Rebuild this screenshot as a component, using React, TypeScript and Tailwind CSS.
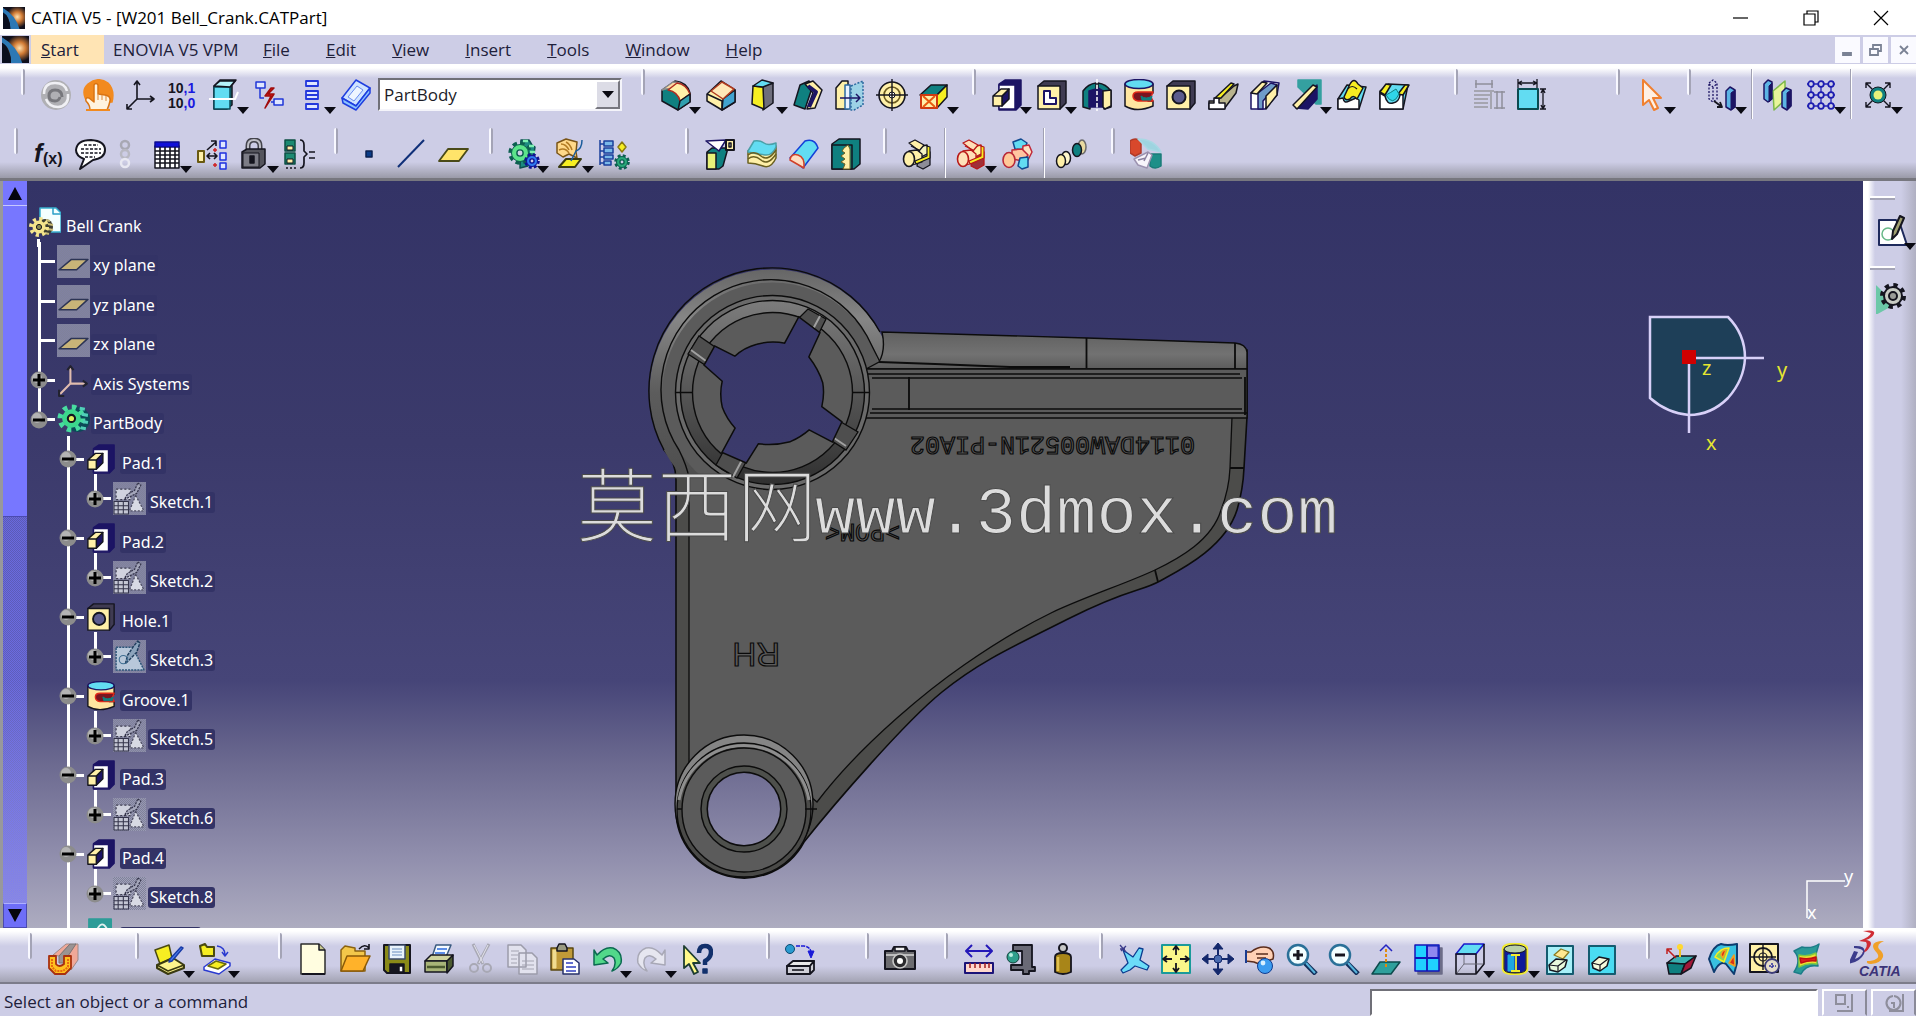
import type { ReactNode } from 'react'

const INK = '#15151f'
const NAVY = '#1c1464'
const TEAL = '#0f8080'
const CREAM = '#fff0a8'
const CYAN = '#62dcf2'
const YEL = '#f6ee22'

// shorthand for a path: d, fill, stroke, stroke width
function P({ d, f = 'none', s = INK, w = 1.5, dash }: { d: string; f?: string; s?: string; w?: number; dash?: string }) {
  return <path d={d} fill={f} stroke={s} strokeWidth={w} strokeDasharray={dash} strokeLinejoin="round" />
}

function Gear({ x, y, r, f, s = INK }: { x: number; y: number; r: number; f: string; s?: string }) {
  return (
    <g>
      <circle cx={x} cy={y} r={r} fill="none" stroke={s} strokeWidth={r * 0.6} strokeDasharray={`${r * 0.45} ${r * 0.335}`} />
      <circle cx={x} cy={y} r={r - 0.5} fill={f} stroke={s} strokeWidth={1} />
      <circle cx={x} cy={y} r={r * 0.35} fill="#cfcfe6" stroke={s} strokeWidth={1.4} />
    </g>
  )
}

function Pair({ a, b, c, line = INK }: { a: string; b: string; c: string; line?: string }) {
  return (
    <>
      <P d="M17 17l11-3v13l-7 4-6-3z" f={c} s={line} w={1.3} />
      <P d="M16 9l9-2 2 8-8 4-4-3z" f={b} s={line} w={1.3} />
      <P d="M7 5l6-3 9 5-5 6z" f={a} s={line} w={1.3} />
      <P d="M9 8l8 4 2 7" s={line} w={1.3} />
      <P d="M7 13l8-1 5 4v8l-13 4z" f={a} s={line} w={1.3} />
      <P d="M13 23l12-5V8l3 1v11l-14 6z" f={YEL} s={line} w={1.2} />
      <ellipse cx="7" cy="21" rx="5.5" ry="7.5" fill={a} stroke={line} strokeWidth="1.6" />
    </>
  )
}

const icons: Record<string, ReactNode> = {
  update: (
    <>
      <circle cx="16" cy="16" r="15" fill="#b0b0b4" />
      <P d="M4 15Q4 4 15 4q10 0 12 8" s="#f0f0f4" w={2.5} />
      <P d="M22 18q0-7-7-7-6 0-6 6 0 5 6 5 4 0 5-4" s="#77777c" w={3} />
      <P d="M28 15q1 12-10 13-9 0-12-8" s="#f0f0f4" w={2.5} />
    </>
  ),
  hand: (
    <>
      <P d="M6 24Q-2 12 6 5q10-8 20-1 7 7 4 19z" f="#f28a1e" s="#f28a1e" />
      <P d="M8 31q0-5-4-9-1-4 3-3l5 4V6q2-3 4 0v9l7 1q6 1 5 6-1 5-3 9z" f="#fff3df" s="#d97414" />
      <P d="M16 15v6M20 16v5M24 17v5" s="#e29b55" w={1.2} />
      <P d="M4 31h24" s="#f28a1e" w={2} />
    </>
  ),
  axis: <P d="M13 2v18M13 20h17M13 20L3 30M10 6l3-4 3 4M26 17l4 3-4 3M3 25v5h5" w={1.6} />,
  mean: (
    <g fontFamily="Liberation Sans" fontWeight="700" fontSize="14" fill={INK}>
      <text x="2" y="14">10<tspan fill="#1a1ae0">,1</tspan></text>
      <text x="2" y="29">10<tspan fill="#1a1ae0">,0</tspan></text>
    </g>
  ),
  box: (
    <>
      <P d="M6 7l6-6h16l-4 5v20l-5 4H6z" f={TEAL} />
      <P d="M6 8h16v22H6z" f={CYAN} s="#0b4a58" />
      <P d="M6 7l6-5h15l-5 6z" f="#b5f4fb" />
      <P d="M1 20h26l3-7" s="#ffffff" w={2} />
    </>
  ),
  breakLink: (
    <>
      <P d="M3 3h9v6H3zM21 20h9v6h-9z" f="#dfe6ff" s="#2137d8" />
      <P d="M7 9v10h4M21 23h-3" s="#2137d8" />
      <P d="M18 9l-6 8h6l-6 12 9-14h-6l6-6z" f="#e01818" s="#a00c0c" />
    </>
  ),
  stack: <P d="M11 2h12v5H11zM11 12h12v8H11zM11 25h12v5H11zM11 16h12" f="#dfe6ff" s="#2338dc" w={1.8} />,
  plate: (
    <>
      <P d="M2 19L16 1l14 8-14 18z" f="#cfe3ff" s="#1e3ee0" />
      <P d="M2 19l14 8 14-18v5L16 31 3 24z" f="#8cc4ff" s="#1e3ee0" />
      <P d="M8 18l9-11 6 4-9 11z" f="#eef5ff" s="#6a8cf0" w={1} />
    </>
  ),
  fillet: (
    <>
      <P d="M2 11L15 2q12 1 15 12v9L18 31 2 22z" f={TEAL} />
      <P d="M2 11L13 3q8 0 11 5l-6 3q-7-3-16 0z" f="#ffd9a0" s="#8a8a8a" />
      <P d="M8 11l9-7q9 1 13 11l-10 7Q18 13 8 11z" f={CREAM} s="#b02c20" />
      <P d="M20 22l10-7v8l-12 8z" f="#2f9fae" />
    </>
  ),
  chamfer: (
    <>
      <P d="M2 15L16 2l14 9v12L17 31 2 22z" f={CREAM} />
      <P d="M18 20l12-9v12l-13 8z" f="#41a3cf" />
      <P d="M6 12L17 3l12 7-11 10z" f="#ffe8b8" s="#b03a20" />
      <P d="M2 15l15 7v9" />
    </>
  ),
  draft: (
    <>
      <P d="M16 7l10-3v20l-10 7z" f="#6e6e7c" />
      <P d="M6 7l10 1 1 22-12-5z" f={YEL} />
      <P d="M6 7l9-6 11 3-10 4z" f={CYAN} />
    </>
  ),
  shell: (
    <>
      <P d="M2 26L8 6l9-4 4 4-8 24z" f={TEAL} />
      <P d="M13 5l8-3 9 9-7 18-8 1 6-16z" f={CREAM} />
      <P d="M16 7l8 6-7 15" s={NAVY} w={4} />
    </>
  ),
  thick: (
    <>
      <P d="M2 9l6-7h6v28H2z" f={CREAM} />
      <P d="M11 6h5v24h-5z" f="#e9f2ff" s="#2c6aa0" />
      <P d="M17 7l12-5v24l-9 5h-3z" f="#9dd2e6" s="#2c6aa0" dash="2 1.5" />
      <P d="M6 19h20M22 15l4 4-4 4" s={NAVY} />
    </>
  ),
  target: (
    <>
      <circle cx="16" cy="16" r="13" fill={CREAM} stroke={INK} strokeWidth="1.6" />
      <circle cx="16" cy="16" r="8" fill="none" stroke="#6b5a20" strokeWidth="1.6" />
      <circle cx="16" cy="16" r="3" fill="#fff" stroke={INK} />
      <P d="M16 0v32M0 16h32" w={1.4} />
    </>
  ),
  replace: (
    <>
      <P d="M2 16L13 6h16l-10 10z" f={TEAL} />
      <P d="M19 16l10-10v12l-10 11z" f={YEL} />
      <P d="M3 16h16v13H3z" f={CREAM} s="#d03a10" w={2} />
      <P d="M5 17l12 11M17 17L5 28" s="#e85a10" w={2} />
    </>
  ),
  pad: (
    <>
      <P d="M8 5l6-4h16v25l-5 5H8z" f={NAVY} s={NAVY} />
      <P d="M8 6h16v24H8z" f="#fff" s={NAVY} />
      <P d="M11 17l7-7v10l-7 7z" f={NAVY} />
      <P d="M2 17h9v10H2zM2 17l8-7h8l-7 7z" f={CREAM} />
    </>
  ),
  pocket: (
    <>
      <P d="M2 7l6-5h22v22l-6 6z" f="#3f3b52" />
      <P d="M2 7h22v23H2z" f={CREAM} />
      <P d="M8 12h6v7h6v6H8z" f="#fff" s={NAVY} w={2} />
    </>
  ),
  shaft: (
    <>
      <P d="M2 12q5-7 13-8v22H9v4l-7-2z" f={TEAL} />
      <P d="M30 12q-5-7-13-8v22h6v4l7-2z" f={TEAL} />
      <P d="M8 12l7-2v18H8z" f={NAVY} s={NAVY} />
      <P d="M17 9l5 3v16h-5z" f={NAVY} s={NAVY} />
      <P d="M22 12l8-1v16l-6 3-2-2z" f={CREAM} />
      <P d="M16 0v32" s="#fff" dash="4 2" />
    </>
  ),
  groove: (
    <>
      <P d="M2 5v22q12 7 28 0v-5h-5v-8h5V5z" f="#ffe6a0" />
      <ellipse cx="16" cy="5" rx="14" ry="4.5" fill={CYAN} stroke={NAVY} strokeWidth="1.5" />
      <P d="M30 13H15q-5 0-5 4t5 5h15l-2-4z" f="#7a1420" s="#e02818" />
      <P d="M18 17q5 4 11 0l-1 4H19z" f={TEAL} s={TEAL} w={1} />
    </>
  ),
  hole: (
    <>
      <P d="M2 7l6-5h22v22l-5 6z" f="#3f3b52" />
      <P d="M2 7h23v23H2z" f={CREAM} />
      <circle cx="14" cy="18" r="6.5" fill="#5b5b8e" stroke={INK} strokeWidth="2" />
    </>
  ),
  rib: (
    <>
      <P d="M12 20L27 7l4-2-2 9-12 16H2v-8h8z" f="#b9b48e" />
      <P d="M2 24h5v-5h5v5h6v6H2z" f="#fff" />
      <P d="M8 19L24 4l3 1-13 14z" f={YEL} />
    </>
  ),
  slot: (
    <>
      <P d="M2 14L15 2l15 2-2 12-12 14H2z" f="#fff" s={NAVY} />
      <P d="M9 14L22 4l6 2-14 16v8H9z" f="#6f9cc9" s={NAVY} />
      <P d="M2 14L13 3l5 1L8 15z" f={CREAM} />
      <P d="M17 17L28 6v10L17 30z" f={CREAM} />
    </>
  ),
  stiffener: (
    <>
      <P d="M7 1h23v24h-5L7 8z" f="#34a0a0" s="#34a0a0" />
      <P d="M5 29l12 1 9-10V6z" f={NAVY} s={NAVY} />
      <P d="M2 26L22 6l4 2L6 30z" f={CREAM} />
    </>
  ),
  multiA: (
    <>
      <P d="M2 20l9-14 19 2-7 22H2z" f={CYAN} />
      <P d="M2 30V20l5-1q1 6 6 3l7-3 3 2v9z" f="#fff" />
      <P d="M8 18l6-13q4-7 8 0l5 4-6 11q-4-5-7 0-5 2-6-2z" f={YEL} />
      <P d="M12 10q4-5 9 0" w={1.2} />
    </>
  ),
  multiB: (
    <>
      <P d="M2 12l8-7 20 1-5 24H2z" f={CYAN} />
      <P d="M2 30V14l5 3q2 9 8 7 6-1 7-8l3-2v16z" f="#fff" />
      <P d="M2 13l6-8 5 1-6 10zM20 15l7-9h4l-6 10z" f={YEL} />
      <P d="M8 16q7 12 13-1l-3-5q-6 4-10 6z" f="#2fd5ea" s={TEAL} w={1} />
    </>
  ),
  scaleOff: (
    <>
      <P d="M2 5h18M3 1v8M19 1v8M24 12v18M29 12v18M21 13h11M21 29h11" s="#8f8f9a" />
      <P d="M1 12h20M1 16h18M1 20h14M1 24h14M1 28h14M18 12v18" s="#a5a5b0" w={2} />
    </>
  ),
  scale: (
    <>
      <P d="M3 10h20v20H3z" f={CYAN} s="#0b4a50" w={2} />
      <P d="M3 4h19M3 0v9M22 0v9M28 10v20M25 10h6M25 30h6M7 2L3 4l4 2M18 2l4 2-4 2M26 14l2-4 2 4M26 26l2 4 2-4" w={1.3} />
    </>
  ),
  cursor: <P d="M8 1v25l6-5 5 10 4-2-5-10h8z" f="#fff0e4" s="#f08030" w={2} />,
  translate: (
    <>
      <P d="M3 4l4-3 4 3v16l-4 3-4-3zM3 5l4 3 4-3M7 8v14" dash="2 1.5" s={NAVY} w={1.3} />
      <P d="M8 22l8 6M11 28h5l-2-5" w={1.8} />
      <P d="M20 12l4-4 5 3v17l-4 3-5-3z" f="#5cb4e4" s={NAVY} />
      <P d="M25 14v17l4-3V11z" f={NAVY} s={NAVY} w={1} />
    </>
  ),
  mirror: (
    <>
      <P d="M1 5l4-4 4 2v17l-4 3-4-3z" f="#5cb4e4" s={NAVY} />
      <P d="M10 12L22 2v19L11 31z" f="#e8f59a" s="#7db84a" />
      <P d="M19 13l4-4 5 2v16l-4 4-5-3z" f="#5cb4e4" s={NAVY} />
      <P d="M6 7v16l3-3V4zM24 14v17l4-4V11z" f={NAVY} s={NAVY} w={1} />
    </>
  ),
  pattern: (
    <>
      <P d="M6 2v28M16 2v28M26 2v28M2 5h28M2 16h28M2 27h28" s="#2222b8" w={1.3} />
      {[6, 16, 26].map((x) => [5, 16, 27].map((y) => <circle key={`${x}-${y}`} cx={x} cy={y} r="2.8" fill="#cfcfe6" stroke="#1d1db0" strokeWidth="1.8" />))}
    </>
  ),
  scaling: (
    <>
      <P d="M4 4l24 24M28 4L4 28M4 9V4h5M23 4h5v5M28 23v5h-5M9 28H4v-5" w={1.4} />
      <circle cx="16" cy="16" r="8" fill={TEAL} stroke={INK} />
      <circle cx="16" cy="16" r="4.5" fill="#e8f27a" />
    </>
  ),
  // row two
  formula: (
    <g fill={INK} fontFamily="Liberation Sans" fontWeight="700">
      <text x="1" y="24" fontStyle="italic" fontSize="25">f</text>
      <text x="10" y="26" fontSize="16">(x)</text>
    </g>
  ),
  balloon: (
    <>
      <P d="M16 2q14 1 14 10 0 8-12 10L5 31l4-10Q1 18 1 12 2 2 16 2z" f="#fff" w={2} />
      <P d="M9 7h14M6 11h20M6 15h20M10 19h10" dash="3 1.5" w={1.6} />
    </>
  ),
  chain: (
    <>
      <circle cx="12" cy="7" r="4" fill="none" stroke="#a8a8b4" strokeWidth="2.5" />
      <circle cx="12" cy="16" r="4" fill="none" stroke="#b8b8c2" strokeWidth="2.5" />
      <circle cx="12" cy="25" r="4" fill="none" stroke="#e8e8f2" strokeWidth="2.5" />
    </>
  ),
  table: (
    <>
      <P d="M4 8h24v22H4z" f="#fff" />
      <P d="M4 4h24v5H4z" f="#1010d8" s="#0c0c90" />
      <P d="M4 13h24M4 17h24M4 21h24M4 25h24M9 9v21M14 9v21M19 9v21M24 9v21" w={1.6} />
    </>
  ),
  relations: (
    <>
      <P d="M2 13h6v11H2z" f={CREAM} s="#6a5a10" w={2} />
      <P d="M24 3h6v7h-6zM24 15h6v7h-6zM24 25h6v6h-6z" f="#dfe6ff" s="#1e30e0" />
      <P d="M11 18h10M14 15l-3 3 3 3M18 15l3 3-3 3M11 12l9-8M15 3h5v5" w={1.6} />
      <P d="M19 10v4M17 12h4M19 25v4M17 27h4" s="#d02020" />
    </>
  ),
  lock: (
    <>
      <P d="M10 14V8q0-6 6-6t6 6v6" s="#44444c" w={5} />
      <P d="M10 14V8q0-6 6-6t6 6v6" s="#c0c0c8" w={2} />
      <P d="M4 14l5-3h18v15l-5 4H4z" f="#55555d" />
      <P d="M5 15h16v14H5z" f="#7c7c86" w={1} />
      <P d="M12 18h4v7h-4z" f={INK} />
    </>
  ),
  equiv: (
    <>
      <P d="M2 2h10v11H2zM2 15h10v11H2z" f="#1c8a72" s="#0d4f43" />
      <P d="M4 8h6v4H4zM4 21h6v4H4z" f={CREAM} w={1} />
      <P d="M17 2q4 0 4 5v6l3 3-3 3v6q0 5-4 5M26 14h6M26 20h6M3 30h2M7 30h2M11 30h2" w={1.7} />
    </>
  ),
  point: <P d="M13 13h6v6h-6z" f="#0a3c88" s="#0a2050" />,
  line: <P d="M3 29L29 2" s="#0f2f78" w={2} />,
  plane: <P d="M2 23l9-12h20l-9 12z" f="#ffe46a" s="#4a4a18" w={1.8} />,
  body: (
    <>
      <P d="M13 2h8l3 5 3 2-1 7-6 12-8 2z" f="#1c8a80" s="#0d4f50" />
      <Gear x={12} y={15} r={9} f="#5ce48a" s="#0d5f50" />
      <P d="M15 3h5M21 8h5M22 14h5" s="#7cf0b0" w={2.5} />
      <Gear x={24} y={23} r={6} f="#2f7af0" s="#101090" />
    </>
  ),
  sketchBody: (
    <>
      <P d="M4 5l9-4 11 3-1 10 1 6-8-4-6 3-6-4z" f="#ffd98a" s="#7a5416" />
      <P d="M8 6q5 0 8 6M13 4q4 2 6 8M6 12q6-3 10 3" s="#b27b24" />
      <P d="M6 29l7-8h15l-6 8z" f={YEL} s="#3a3a10" w={2} />
      <P d="M29 2q0 9-6 11l-5 10" s="#1a5c9c" />
    </>
  ),
  insertSet: (
    <>
      <P d="M2 2v25M2 6h4M2 13h4M2 19h4M2 25h4" s="#1a3f9c" />
      <P d="M6 3h9v5H6zM6 10h9v5H6zM6 17h9v4H6zM6 23h7v4H6z" f="#7ab8e8" s="#1a3f9c" />
      <P d="M24 4l4 5-4 5-4-5z" f={YEL} s="#8a7a10" />
      <Gear x={24} y={24} r={6} f="#28a878" s="#0c5f50" />
    </>
  ),
  split: (
    <>
      <P d="M3 14l5-4h16l-5 18-4 3H3z" f={TEAL} />
      <P d="M3 15h9v16H3z" f="#e8f27a" />
      <P d="M2 3l20-1-7 11z" f="#fff" s={NAVY} />
      <P d="M22 2h8v10h-8z" f={CREAM} w={2} />
      <P d="M25 5h2v4h-2z" f="#fff" />
    </>
  ),
  surface: (
    <>
      <P d="M2 13q4-5 8-3t8 3 12-5v12q-5 11-13 8T2 25z" f={CREAM} s="#6a6020" />
      <P d="M2 13L8 3q6-1 10 2t12 0v4q-4 9-11 8T2 14z" f={CYAN} s="#4aa0a8" />
      <P d="M2 17q6-5 13 1t15-6M2 21q6-5 13 1t15-6" s="#6a6020" />
    </>
  ),
  halfPipe: (
    <>
      <P d="M2 20L17 3q10-3 13 7L15 30z" f={CYAN} s="#1440d8" />
      <P d="M2 22q1-7 8-5t6 13z" f="#ffdcc0" s="#d04028" />
    </>
  ),
  sew: (
    <>
      <P d="M2 6l7-5h21v25l-6 5H2z" f={TEAL} />
      <P d="M2 7h20v24H2z" f={TEAL} />
      <P d="M14 10l4-3 2 4v20h-7l2-5-4-2 4-3-4-3 4-3-3-2z" f={CREAM} s="#6a6020" w={1} />
    </>
  ),
  assemble: <Pair a={CREAM} b="#f4f4c0" c="#8c8c98" />,
  add: <Pair a="#ffe0b8" b={CREAM} c="#a03038" line="#b81818" />,
  remove: (
    <>
      <P d="M12 4l8-3 6 4-3 7-9-1z" f={CYAN} s="#104a90" />
      <P d="M22 8l6-1 3 7-4 8-6-2z" f="#ffe0c0" s="#c02838" />
      <P d="M11 12l10-1 6 6-4 6-12-2z" f="#ffc4a0" s="#c02838" />
      <P d="M19 20l8-1v10l-6 2-4-3z" f={CYAN} s="#104a90" />
      <ellipse cx="8" cy="22" rx="6" ry="7.5" fill="#ffc898" stroke="#b82838" strokeWidth="1.6" />
    </>
  ),
  union: (
    <>
      <ellipse cx="11" cy="20" rx="4.5" ry="6.5" fill="#fff7cc" stroke={INK} strokeWidth="1.5" />
      <ellipse cx="6" cy="23" rx="4.5" ry="6.5" fill={CREAM} stroke={INK} strokeWidth="1.5" />
      <ellipse cx="27" cy="9" rx="4" ry="7" fill="#e8d9a0" stroke="#6a6a6a" strokeWidth="1.5" />
      <ellipse cx="22" cy="12" rx="4.5" ry="6.5" fill={TEAL} stroke={INK} strokeWidth="1.5" />
    </>
  ),
  publish: (
    <>
      <P d="M0 3q5-4 11 0v12l-6 3-5-3z" f="#d8482c" s="#b03a28" />
      <P d="M8 1q16 0 23 13L18 11z" f="#9ed4e0" s="#a8d8e4" />
      <P d="M20 16h11v12q-6 4-11 0z" f="#1e8f88" s="#1a7c78" />
      <P d="M4 21l14-7 4 3-5 13-9-3z" f="#f7f5fb" s="#9c93b0" />
      <P d="M8 22l8-2M18 15l-4 8" s="#8b82a0" />
    </>
  ),
  // bottom bar
  vise: (
    <>
      <P d="M6 12L19 1h4L12 13zM20 14L28 1h3v16l-7 10z" f="#f0a898" s="#9c8a88" w={1} />
      <P d="M12 13L23 1h6l-8 12v7h-9z" f="#9a9494" s="#7c7474" w={1} />
      <P d="M2 13h7v8q3 4 8 0v-8h7v12l-6 6H8l-6-6z" f="#ffc020" s="#a83010" w={1.8} />
      <P d="M5 16v8l4 4h7l5-4v-8" s="#e86a10" w={2} dash="2 1" />
    </>
  ),
  openPen: (
    <>
      <P d="M1 7L15 2l3 13-12 6z" f={YEL} s="#4a4a10" />
      <P d="M3 22l16-7 11 7v3l-16 6-11-6z" f="#fff58c" s="#3a3a10" w={2} />
      <P d="M3 22l11 6 16-6" s="#3a3a10" />
      <P d="M29 5L18 18l-3 1 1-3L27 4z" f="#4a80f0" s="#1a3ca8" />
    </>
  ),
  openBox: (
    <>
      <P d="M1 3l5-2 2 3h7v9H3z" f={YEL} s="#4a4a10" w={2} />
      <P d="M18 3q8 1 8 9M23 9l3 4 3-4" s="#2a3ad0" />
      <P d="M5 24l11-8 15 4v3l-11 8-15-4z" f="#fff" s="#2a3ad0" />
      <P d="M9 23l8-5 10 3-8 5z" f={YEL} s="#6a6a10" />
    </>
  ),
  newDoc: (
    <>
      <P d="M4 1h18l6 6v24H4z" f="#fffde0" s="#2c2c2c" />
      <P d="M22 1v6h6" f="#c8c890" />
      <P d="M5 31h23" w={2} />
    </>
  ),
  open: (
    <>
      <P d="M2 7l4-4 10 2v3h10v20H2z" f="#f3c74a" s="#8a6210" />
      <P d="M2 28L8 13h23l-7 15z" f="#ffb22a" s="#8a5a08" />
      <P d="M20 6q6-6 10-1M30 1v5h-5" w={1.6} />
    </>
  ),
  save: (
    <>
      <P d="M3 2h26v28H6l-3-3z" f="#8a8a18" w={2} />
      <P d="M8 2h16v14H8z" f="#e9f3fb" s="#3a4a6a" />
      <P d="M11 6h10M11 9h10M11 12h10" s="#6b8ec0" w={1.2} />
      <P d="M9 21h14v9H9z" f={INK} />
      <P d="M18 23h4v6h-4z" f="#fff" />
    </>
  ),
  print: (
    <>
      <P d="M9 14l4-12h15l-5 12z" f="#f4faff" s="#3a5a80" />
      <P d="M14 6h10M12 10h10" s="#2a6ae0" />
      <P d="M2 18l6-6h22l-4 6z" f="#cfd3a0" />
      <P d="M2 18h22v11H2z" f="#a8b478" />
      <P d="M24 18l6-6v11l-6 7z" f="#4c5a30" />
      <P d="M4 24h18" s="#4c5a30" w={2.5} />
    </>
  ),
  cut: (
    <>
      <P d="M8 1l10 20M24 1L13 21" s="#a8a8b4" w={3} />
      <P d="M9 2l9 18M23 2L14 20" s="#e4e4ee" w={1} />
      <circle cx="9" cy="25" r="4" fill="none" stroke="#a8a8b4" strokeWidth="2" />
      <circle cx="22" cy="25" r="4" fill="none" stroke="#a8a8b4" strokeWidth="2" />
    </>
  ),
  copy: (
    <>
      <P d="M1 2h13l5 5v17H1zM12 10h13l5 5v16H12z" f="#e2e2ee" s="#9c9caa" />
      <P d="M4 8h8M4 12h7M4 16h6M4 20h6M15 18h12M15 22h12M15 26h12" s="#a4a4b2" w={1.2} />
    </>
  ),
  paste: (
    <>
      <P d="M2 5h22v22H2z" f="#c09a38" s="#5a4812" />
      <P d="M4 7h3v18H4z" f="#f0dc90" s="#f0dc90" w={1} />
      <P d="M8 5l2-4h6l2 4v3H8z" f="#9a9a80" />
      <P d="M14 16h11l5 4v11H14z" f="#fff" s="#26306a" />
      <P d="M17 20h7M17 24h10M17 28h10" s="#3040c0" w={1.6} />
    </>
  ),
  undo: (
    <P d="M3 7l3 5q8-9 16-7 10 4 8 15-3 6-9 8 5-7 2-13-4-5-11 1l5 4-14 2z" f="#52d88a" s="#0b6a50" />
  ),
  redo: (
    <P d="M29 7l-3 5q-8-9-16-7Q0 9 2 20q3 6 9 8-5-7-2-13 4-5 11 1l-5 4 14 2z" f="#e6e6f0" s="#a8a8b6" />
  ),
  whats: (
    <>
      <P d="M3 3v22l5-4 5 10 4-2-5-9h7z" f="#fff98a" s="#1c3c30" w={1.8} />
      <P d="M18 10q0-7 6-7t6 6-6 9v4" s="#12306c" w={4.5} />
      <P d="M22 26h4v4h-4z" f="#12306c" s="#12306c" />
    </>
  ),
  machine: (
    <>
      <circle cx="5" cy="6" r="4.5" fill="#2a9ad0" stroke="#0c4a70" />
      <P d="M11 3h8q7 1 7 7" s="#1a1ad8" dash="4 1" />
      <P d="M23 8l3 7 3-7z" f="#1a1ad8" s="#1a1ad8" w={1} />
      <P d="M2 23l6-5h21l-4 5z" f="#e8e8e8" w={1.8} />
      <P d="M2 23h23v8H2zM25 23l4-5v9l-4 4z" f="#d0d0d8" w={1.8} />
      <P d="M7 27h12" w={1.6} />
    </>
  ),
  camera: (
    <>
      <P d="M1 8h7l2-4h12l2 4h7v18H1z" f="#6c6c70" w={2} />
      <P d="M11 4h10v4H11z" f="#f0f0f0" />
      <P d="M2 12h28" s="#d8d8d8" />
      <circle cx="16" cy="18" r="7" fill="#2a2a2e" stroke="#c8c8c8" strokeWidth="1.6" />
      <circle cx="16" cy="18" r="3" fill="#fff" />
    </>
  ),
  measure: (
    <>
      <P d="M3 8h26M9 2L3 8l6 6M23 2l6 6-6 6" s="#2418b8" w={2} />
      <P d="M2 20h28v10H2z" f="#ffd8cc" s="#1c1478" w={2} />
      <P d="M7 20v5M12 20v5M17 20v5M22 20v5M26 20v5" s="#a02020" />
    </>
  ),
  caliper: (
    <>
      <P d="M8 2h19v22h3v4h-6v3h-6v-4H6v-5h11V8H8z" f="#6a6a76" w={1.8} />
      <circle cx="8" cy="14" r="6" fill="#2f9f8c" stroke="#10423a" />
      <circle cx="6" cy="12" r="2" fill="#b8f0e0" />
    </>
  ),
  weight: (
    <>
      <circle cx="16" cy="5" r="4" fill="#c8c8c8" stroke={INK} strokeWidth="2" />
      <P d="M8 14q0-4 8-4t8 4v15q-8 4-16 0z" f="#a88518" w={1.8} />
      <P d="M11 14v14" s="#e0c050" w={2.5} />
    </>
  ),
  fly: (
    <>
      <P d="M5 7l10 7 6-9 4 1-3 11 9 6-2 4-12-4-5 4-7 3-2-3 7-7z" f="#6cdcf8" s="#0c3c90" w={1.3} />
      <P d="M2 2l6 7M8 3L3 8M2 6h5" s="#3c3c8c" w={1.3} />
    </>
  ),
  fit: (
    <>
      <P d="M2 2h28v28H2z" f="#fbf78a" s="#1a9a9a" w={2} />
      <P d="M16 4v8M13 7l3-4 3 4M16 28v-8M13 25l3 4 3-4M4 16h8M7 13l-4 3 4 3M28 16h-8M25 13l4 3-4 3" w={1.8} />
    </>
  ),
  pan: (
    <>
      <P d="M16 1v30M1 16h30" s="#14286c" w={2} />
      <P d="M16 0l5 6H11zM16 32l5-6H11zM0 16l6-5v10zM32 16l-6-5v10z" f="#14286c" s="#14286c" w={1} />
      <circle cx="16" cy="16" r="4" fill="#4a6ab0" stroke="#14286c" />
    </>
  ),
  rotate: (
    <>
      <P d="M2 9h5q9-7 18-4 6 3 4 11l-14 5-5-2-8-1z" f="#ffd0b4" s="#5a2c1c" />
      <P d="M12 11h12M13 15h9" s="#5a2c1c" />
      <circle cx="21" cy="23" r="7.5" fill="#3c9cf0" stroke="#103c90" />
      <circle cx="19" cy="20" r="2.4" fill="#d8f0ff" />
      <P d="M2 7v13" s="#1a3c90" w={2} />
    </>
  ),
  zoomIn: (
    <>
      <P d="M19 20l11 11" s="#12305c" w={5} />
      <P d="M20 20l9 10" s="#58b4dc" w={2} />
      <circle cx="12" cy="12" r="10" fill="#f2feff" stroke="#2a7098" strokeWidth="2.5" />
      <P d="M12 7v10M7 12h10" w={3} />
    </>
  ),
  zoomOut: (
    <>
      <P d="M19 20l11 11" s="#12305c" w={5} />
      <P d="M20 20l9 10" s="#58b4dc" w={2} />
      <circle cx="12" cy="12" r="10" fill="#f2feff" stroke="#2a7098" strokeWidth="2.5" />
      <P d="M7 12h10" w={3} />
    </>
  ),
  normalView: (
    <>
      <P d="M2 31l8-12h20l-9 12z" f="#2fa09c" s="#0c4a4c" />
      <P d="M16 24V6" s="#e08a10" w={2} dash="3 2" />
      <P d="M10 8l6-6 6 6" s="#2424c0" />
    </>
  ),
  quad: (
    <>
      <P d="M6 5h24v26H6z" f="#6c6c88" s="#6c6c88" />
      <P d="M3 2h24v26H3z" f="#20d0ff" s="#1414b8" w={1.5} />
      <P d="M15 3h11v12H15z" f="#9088f0" s="#1414b8" w={1} />
      <P d="M15 2v26M3 15h24" s="#1414b8" w={1.8} />
    </>
  ),
  cube: (
    <>
      <P d="M2 11L10 1h20l-8 10z" f={CYAN} s="#1a1acc" />
      <P d="M2 11h20v20H2zM22 31l8-10V1M22 11v20" w={1.6} />
      <P d="M10 12v9h19M10 21L3 30" s="#6c6c78" w={1} />
    </>
  ),
  cylinder: (
    <>
      <P d="M4 6v20q0 5 12 5t12-5V6q0-5-12-5T4 6z" f="#0f1a98" s="#f2ec30" w={2.5} />
      <P d="M5 6v20q0 4 11 4t11-4V6" w={1} />
      <P d="M9 12v16h6V12z" f="#1fa8e0" s="#1fa8e0" w={1} />
      <ellipse cx="16" cy="6" rx="11" ry="4" fill="#b8cfa8" stroke={INK} />
      <P d="M17 12v16M12 12h9M12 28h9" s="#f2ec30" w={1.8} />
    </>
  ),
  hide: (
    <>
      <P d="M3 3h26v28H3z" f="#a8f0f8" s="#145c70" w={2} />
      <P d="M10 12l7-6 8 3-6 7z" f="#ffe890" s="#8a7a20" w={1.3} />
      <P d="M5 22l7-6 11 1-2 7-7 5-8-2z" f="#eafadc" />
      <P d="M5 22l9 1v5M14 23l8-6" w={1.2} />
    </>
  ),
  swap: (
    <>
      <P d="M3 3h26v28H3z" f="#4adcf2" s="#145c70" w={2} />
      <P d="M6 20l7-6 10 2-2 7-7 5-7-3z" f="#f6fadc" />
      <P d="M6 20l8 2v5M14 22l8-6" w={1.2} />
    </>
  ),
  render: (
    <>
      <P d="M2 20l9-7h20l-11 8z" f="#39b0b0" />
      <P d="M2 20l18 1-4 10H4z" f={TEAL} />
      <P d="M20 21l11-8-5 12-10 6z" f="#a01838" />
      <P d="M11 15L2 6M2 11V6h5" s="#c02020" />
      <circle cx="15" cy="4" r="3" fill="#ffd830" />
      <P d="M15 6v8" s="#f0c020" w={2} />
    </>
  ),
  stress: (
    <>
      <P d="M2 16Q6 3 14 1q6 2 16 0v19l-3 11-8-10q-6-4-12 8z" f="#38c0e0" s="#0d3c70" w={2} />
      <P d="M8 14q5-9 14-9l-5 14z" f="#7ed858" s={YEL} />
      <P d="M14 12q1-5 5-5l-3 8zM22 20l5-8 1 11z" f="#d83018" s="#f0a020" />
    </>
  ),
  inspect: (
    <>
      <P d="M1 1h28v28H1z" f={CREAM} w={2} />
      <circle cx="14" cy="14" r="9" fill="none" stroke={INK} strokeWidth="1.8" />
      <circle cx="14" cy="14" r="4" fill="none" stroke={INK} strokeWidth="1.2" />
      <P d="M14 1v26M1 14h26" w={1.4} />
      <circle cx="23" cy="23" r="7" fill="#e4dcc8" stroke="#3c3c78" strokeWidth="1.8" />
      <P d="M20 23h7M23 20v6" s="#3030a0" dash="2 1" />
    </>
  ),
  analysis: (
    <>
      <P d="M3 8l8-4q10 2 17-3l-3 10q0 5 2 12-12-2-17 8l-7-2q8-12 0-21z" f="#2a9a98" s="#1c7c88" />
      <P d="M8 12q9 2 17-2l1 11q-9-2-18 3z" f="#f0e030" s="#80c840" />
      <P d="M9 15q8 2 16-1v4q-7-1-15 2z" f="#e02020" s="#c01010" />
    </>
  ),
  sketcher: (
    <>
      <P d="M2 5h17l5 7 6 18H2z" f="#fff" s="#1e2a5c" w={2} />
      <circle cx="11" cy="19" r="6" fill="none" stroke="#68b888" strokeWidth="1.5" />
      <P d="M23 1l4 2-7 16-5 5 1-8z" f="#a0a070" s={INK} w={2} />
    </>
  ),
  gear: (
    <>
      <P d="M0 4v28l18-10z" f="#6cc8a8" s="#6cc8a8" />
      <circle cx="17" cy="14" r="11" fill="none" stroke={INK} strokeWidth="4" strokeDasharray="4.3 4.34" />
      <circle cx="17" cy="14" r="9" fill="#c8ccc4" stroke={INK} strokeWidth="2" />
      <circle cx="17" cy="14" r="4" fill="#9a9c98" stroke={INK} strokeWidth="2" />
    </>
  ),
  // tree nodes
  part: (
    <>
      <P d="M11 1h16l5 5v19H17L11 14z" f="#f4ffff" s="#38b0d0" />
      <P d="M24 1v6h8" s="#2aa0c8" />
      <circle cx="16" cy="20" r="8" fill="#3c3c30" />
      <P d="M17 13l4 1M19 17l5 1M19 22l5 1M16 26l4 1" s="#c8bc78" w={2} />
      <circle cx="10" cy="20" r="8" fill="none" stroke="#f4e48c" strokeWidth="4" strokeDasharray="3.1 3.18" />
      <circle cx="10" cy="20" r="6.5" fill="#f4e48c" />
      <circle cx="10" cy="20" r="2.6" fill="#8a8a50" stroke={INK} />
    </>
  ),
  partBody: (
    <>
      <circle cx="20" cy="16" r="12" fill="#0c4a58" />
      <circle cx="14" cy="15" r="11" fill="none" stroke="#48dca0" strokeWidth="5" strokeDasharray="4.3 4.34" />
      <circle cx="14" cy="15" r="9" fill="#3cd88c" />
      <P d="M22 5l5 1M24 11l6 1M25 18l5 1M23 24l5 1" s="#50d0b8" w={3} />
      <circle cx="14" cy="15" r="3.5" fill="#e0f060" stroke={INK} strokeWidth="2" />
    </>
  ),
  treePlane: <P d="M2 24L14 14h16L19 24z" f="#c8b478" s="#2c3454" />,
  treeAxis: (
    <>
      <P d="M13 3v16M13 19h14M13 19L3 29" s="#e0bcae" w={2} />
      <P d="M10 6l3-4 3 4M25 16l4 3-4 3M2 25v6h5" s="#22222e" w={2} />
    </>
  ),
  treeSketch: (
    <>
      <P d="M3 7h14v10H3z" f="#d0d2de" s="#3c3c50" w={1.2} dash="2 2" />
      <P d="M22 13l8 15H16z" f="#d8dae4" s="#4c4c60" w={1.2} dash="2 1.5" />
      <P d="M1 19h14v12H1z" f="#c4c6d4" s="#33334a" w={1} />
      <P d="M1 23h14M1 27h14M5 19v12M10 19v12" s="#33334a" w={1} />
      <P d="M24 1l3 2-4 8-12 6 3-5 7-4z" f="#a4a6ba" s="#33334a" w={1.2} dash="2 1" />
    </>
  ),
  treeSketchBlue: (
    <>
      <P d="M3 7h16l11 22H3z" f="#b8c8da" s="#2c5478" w={1.4} dash="2 1" />
      <P d="M24 1l2 2-3 9-11 11 2-8 6-9z" f="#8ca4bc" s="#1e3c5c" w={1.4} dash="3 1" />
      <circle cx="10" cy="19" r="4" fill="none" stroke="#3c6c90" />
    </>
  ),
  treeTeal: (
    <>
      <P d="M3 1h24v14H3z" f="#2c9c98" s="#2c9c98" />
      <P d="M12 12q5-10 10-1" s="#e0f0f0" w={2} />
    </>
  ),
}

function Icon({ name, size = 32 }: { name: string; size?: number }) {
  return (
    <svg viewBox="0 0 32 32" width={size} height={size} className="shrink-0 block" aria-hidden="true">
      {icons[name]}
    </svg>
  )
}

// "name" plain tool, "name+" has a flyout arrow, "name-" sits in a narrow cell, "|" is a separator
function Tools({ items, className = '' }: { items: string; className?: string }) {
  return (
    <div className={`flex shrink-0 ${className}`}>
      <span className="mt-[5px] mr-[15px] h-[26px] w-1 rounded-sm border-r-2 border-[#a4a4b6] bg-[#f8f8ff]" />
      {items.split(' ').map((item, i) => {
        if (item === '|') return <span key={i} className="mt-[5px] mr-[10px] h-[50px] w-[2px] border-l border-[#a0a0b2] bg-white" />
        const name = item.replace(/[+-]$/, '')
        const flyout = item.endsWith('+')
        const width = flyout ? 'w-[45px]' : item.endsWith('-') ? 'w-[38px]' : 'w-[42px]'
        return (
          <button key={i} type="button" aria-label={name} className={`relative mt-[12px] h-[38px] ${width}`}>
            <Icon name={name} />
            {flyout && <Arrow className="absolute bottom-0 left-[29px]" />}
          </button>
        )
      })}
    </div>
  )
}

function Arrow({ className = '' }: { className?: string }) {
  return (
    <svg viewBox="0 0 12 7" width="12" height="7" className={className} aria-hidden="true">
      <path d="M0 0h12L6 7z" fill="#0a0a12" />
    </svg>
  )
}

function AppIcon({ size }: { size: number }) {
  return (
    <svg viewBox="0 0 24 24" width={size} height={size} className="shrink-0" aria-hidden="true">
      <defs>
        <radialGradient id="sun" cx="0.65" cy="0.45" r="0.5">
          <stop offset="0" stopColor="#ffe2b0" />
          <stop offset="0.45" stopColor="#d07a34" />
          <stop offset="1" stopColor="#10101c" />
        </radialGradient>
      </defs>
      <path d="M0 0h24v24H0z" fill="url(#sun)" />
      <path d="M0 1q14 8 18 23H8Q8 10 0 6z" fill="#2c78b4" />
      <path d="M0 6q8 6 8 18H0z" fill="#0a0f1e" />
    </svg>
  )
}

function TitleBar() {
  return (
    <header className="flex h-[35px] shrink-0 items-center bg-white pl-[3px]">
      <AppIcon size={22} />
      <h1 className="ml-[6px] flex-1 text-[17px] text-black">CATIA V5 - [W201 Bell_Crank.CATPart]</h1>
      {['M0 8h15', 'M1 4h11v11H1zM4 4V1h11v11h-3', 'M1 1l14 14M15 1L1 15'].map((d, i) => (
        <button key={d} type="button" aria-label={['Minimize', 'Restore', 'Close'][i]} className="flex h-full w-[70px] items-center justify-center">
          <svg viewBox="0 0 16 16" width="16" height="16"><path d={d} fill="none" stroke="#000" strokeWidth="1.2" /></svg>
        </button>
      ))}
    </header>
  )
}

const menus = ['File', 'Edit', 'View', 'Insert', 'Tools', 'Window', 'Help']

function MenuBar() {
  return (
    <nav className="flex h-[29px] shrink-0 items-stretch bg-[#cdcde6] text-[17px] text-[#20203a]">
      <div className="flex w-[31px] items-center pl-[2px]"><AppIcon size={27} /></div>
      <button type="button" className="w-[73px] bg-[#ffe4b4] pl-[10px] text-left"><u>S</u>tart</button>
      <button type="button" className="w-[159px] pl-[9px] text-left whitespace-nowrap">ENOVIA V5 VPM</button>
      <div className="flex gap-9">
        {menus.map((m) => (
          <button key={m} type="button"><u>{m[0]}</u>{m.slice(1)}</button>
        ))}
      </div>
      <div className="ml-auto flex gap-[3px] pt-[2px] pb-px">
        {['M3 11h8v2H3z', 'M2 7h8v6H2zM5 6V3h8v6h-3', 'M4 4l8 8M12 4l-8 8'].map((d, i) => (
          <button key={d} type="button" aria-label={['Minimize document', 'Restore document', 'Close document'][i]} className="flex w-[25px] items-center justify-center bg-[#fafaff]">
            <svg viewBox="0 0 16 16" width="16" height="16"><path d={d} fill="none" stroke="#7a8294" strokeWidth="1.8" /></svg>
          </button>
        ))}
      </div>
    </nav>
  )
}

function TopTools() {
  return (
    <div className="h-[117px] shrink-0 overflow-hidden border-b-[3px] border-[#77777f] bg-[linear-gradient(#ffffff,#ffffff_4px,#cdcde6_14px,#cdcde6_98px,#9a9aa8)]">
      <div className="flex h-[59px]">
        <Tools className="ml-[21px]" items="update hand axis mean box+ breakLink stack+ plate-" />
        <label className="sr-only" htmlFor="body">Current body</label>
        <div className="relative mt-[14px] h-[33px] w-[244px] shrink-0">
          <select id="body" defaultValue="PartBody" className="h-full w-full appearance-none border-2 border-t-[#707078] border-r-[#f4f4fa] border-b-[#f4f4fa] border-l-[#707078] bg-white pl-[4px] text-[17px] text-[#1c1c28]">
            <option>PartBody</option>
          </select>
          <span className="pointer-events-none absolute top-[2px] right-[2px] flex h-[29px] w-[25px] items-center justify-center border-2 border-t-white border-r-[#77777f] border-b-[#77777f] border-l-white bg-[#dcdce6]">
            <Arrow />
          </span>
        </div>
        <Tools className="ml-[19px]" items="fillet+ chamfer draft+ shell thick target replace+" />
        <Tools className="ml-[9px]" items="pad+ pocket+ shaft groove hole rib slot stiffener+ multiA multiB" />
        <Tools className="ml-[34px]" items="scaleOff scale" />
        <Tools className="ml-[59px]" items="cursor+" />
        <Tools className="ml-[7px]" items="translate+ | mirror pattern+ | scaling+" />
      </div>
      <div className="flex h-[55px]">
        <Tools className="ml-[14px]" items="formula balloon- chain- table+ relations lock+ equiv" />
        <Tools className="ml-[9px]" items="point line plane" />
        <Tools className="ml-[10px]" items="body+ sketchBody+ insertSet" />
        <Tools className="ml-[45px]" items="split surface halfPipe sew" />
        <Tools className="ml-[11px]" items="assemble | add+ remove | union" />
        <Tools className="ml-[14px]" items="publish" />
      </div>
    </div>
  )
}

function Scroller() {
  return (
    <div className="flex w-[27px] shrink-0 flex-col border-l-[3px] border-[#98989c]">
      <button type="button" aria-label="Scroll up" className="flex h-[25px] items-center justify-center border-b border-[#c8c8ff] bg-[#7777ff]">
        <svg viewBox="0 0 14 13" width="14" height="13"><path d="M7 0l7 13H0z" fill="#05050c" /></svg>
      </button>
      <div className="h-[311px] border-b border-[#4a4ab0] bg-[#7777ff]" />
      <div className="flex-1 bg-[#7777ff80] bg-[repeating-conic-gradient(#7777ff88_0_25%,transparent_0_50%)] bg-[length:2px_2px]" />
      <button type="button" aria-label="Scroll down" className="flex h-[25px] items-center justify-center border border-[#4a4ab0] border-t-[#b0b0ff] bg-[#6e6ef8]">
        <svg viewBox="0 0 14 13" width="14" height="13"><path d="M0 0h14L7 13z" fill="#05050c" /></svg>
      </button>
    </div>
  )
}

type Node = { label: string; icon: string; level: 0 | 1 | 2; mark?: '+' | '-' }

const nodes: Node[] = [
  { label: 'xy plane', icon: 'treePlane', level: 0 },
  { label: 'yz plane', icon: 'treePlane', level: 0 },
  { label: 'zx plane', icon: 'treePlane', level: 0 },
  { label: 'Axis Systems', icon: 'treeAxis', level: 0, mark: '+' },
  { label: 'PartBody', icon: 'partBody', level: 0, mark: '-' },
  { label: 'Pad.1', icon: 'pad', level: 1, mark: '-' },
  { label: 'Sketch.1', icon: 'treeSketch', level: 2, mark: '+' },
  { label: 'Pad.2', icon: 'pad', level: 1, mark: '-' },
  { label: 'Sketch.2', icon: 'treeSketch', level: 2, mark: '+' },
  { label: 'Hole.1', icon: 'hole', level: 1, mark: '-' },
  { label: 'Sketch.3', icon: 'treeSketchBlue', level: 2, mark: '+' },
  { label: 'Groove.1', icon: 'groove', level: 1, mark: '-' },
  { label: 'Sketch.5', icon: 'treeSketch', level: 2, mark: '+' },
  { label: 'Pad.3', icon: 'pad', level: 1, mark: '-' },
  { label: 'Sketch.6', icon: 'treeSketch', level: 2, mark: '+' },
  { label: 'Pad.4', icon: 'pad', level: 1, mark: '-' },
  { label: 'Sketch.8', icon: 'treeSketch', level: 2, mark: '+' },
]

function Rail({ end, mark, stub }: { end?: boolean; mark?: string; stub?: boolean }) {
  return (
    <span className="relative flex h-full w-6 shrink-0 items-center justify-center">
      <span className={`w-[3px] bg-white ${end ? 'h-1/2 self-start' : 'h-full'}`} />
      {stub && <span className="absolute left-1/2 h-[3px] w-4 bg-white" />}
      {mark && (
        <svg viewBox="0 0 18 18" width="18" height="18" className="absolute" aria-hidden="true">
          <circle cx="9" cy="9" r="8.5" fill="#8c8c8c" />
          <circle cx="7" cy="7" r="5" fill="#b4b4b4" />
          <path d={mark === '+' ? 'M3 9h12M9 3v12' : 'M3 9h12'} stroke="#000" strokeWidth="3" />
        </svg>
      )}
    </span>
  )
}

function TreeRow({ node, index }: { node: Node; index: number }) {
  const { label, icon, level, mark } = node
  const hidden = icon.startsWith('treeSketch') || icon === 'treePlane'
  const parent = mark === '-'
  return (
    <li className={`flex items-center ${index % 2 ? 'h-[40px]' : 'h-[39px]'}`}>
      {level > 0 && <span className="w-[29px] shrink-0" />}
      {level === 2 && <Rail />}
      {level === 2 && <span className="w-[3px] shrink-0" />}
      <Rail stub mark={mark} end={level === 2 || label === 'PartBody'} />
      <span className={`relative ml-[6px] shrink-0 ${level === 2 ? 'w-[35px]' : 'w-[34px]'}`}>
        {parent && <span className={`absolute top-full h-2 w-[3px] bg-white ${level === 1 ? 'left-2' : 'left-[10px]'}`} />}
        <span className={`relative block w-[33px] ${hidden ? 'bg-[#a2a4bcb0] bg-[repeating-conic-gradient(#80829a_0_25%,transparent_0_50%)] bg-[length:2px_2px]' : ''}`}>
          <Icon name={icon} size={level === 1 ? 30 : 33} />
        </span>
      </span>
      <span className="mt-2 rounded-[3px] bg-[#333366] px-[2px] text-[16px] leading-[21px] whitespace-nowrap">{label}</span>
    </li>
  )
}

function Tree() {
  return (
    <ul className="relative w-[240px] overflow-hidden pt-[22px] font-['Noto_Sans',sans-serif] text-white">
      <li className="flex h-[39px] items-center">
        <span className="relative ml-[2px] w-[37px] shrink-0">
          <span className="absolute top-full left-[8px] h-2 w-[3px] bg-white" />
          <Icon name="part" />
        </span>
        <span className="mt-2 text-[16px] leading-[21px]">Bell Crank</span>
      </li>
      {nodes.map((n, i) => <TreeRow key={n.label} node={n} index={i} />)}
      <li className="flex h-[40px] items-center">
        <span className="w-[29px]" />
        <Rail />
        <span className="ml-[6px] w-[34px]"><Icon name="treeTeal" size={30} /></span>
        <span className="mt-2 h-[21px] w-[81px] rounded-[3px] bg-[#333366]" />
      </li>
    </ul>
  )
}

const BORE =
  'M735 357Q745 348 757 345Q771 341 785 344L799 318L819 333L808 357Q818 370 822 383Q824 394 821 407L841 422L832 441L809 429Q801 436 790 441Q775 445 758 443L746 462L723 452L736 428Q727 418 723 407Q720 394 723 381L705 365L715 347Z'

function Crank() {
  const line = { fill: 'none', stroke: '#0c0c0c', strokeWidth: 1.4 }
  return (
    <svg viewBox="560 250 800 650" width="800" height="650" className="absolute top-[69px] left-[533px]" role="img" aria-label="Bell crank part">
      <defs>
        <linearGradient id="rim" x1="0" y1="0" x2="0" y2="1">
          <stop offset="0" stopColor="#666666" />
          <stop offset="0.2" stopColor="#868686" />
          <stop offset="0.5" stopColor="#5c5c5c" />
          <stop offset="1" stopColor="#484848" />
        </linearGradient>
        <linearGradient id="bore" x1="0" y1="0" x2="0" y2="1">
          <stop offset="0" stopColor="#7c7c7c" />
          <stop offset="0.5" stopColor="#565656" />
          <stop offset="1" stopColor="#303030" />
        </linearGradient>
        <linearGradient id="beam" x1="0" y1="0" x2="0" y2="1">
          <stop offset="0" stopColor="#606060" />
          <stop offset="0.6" stopColor="#727272" />
          <stop offset="1" stopColor="#5c5c5c" />
        </linearGradient>
        <mask id="holes">
          <rect x="560" y="250" width="800" height="650" fill="#fff" />
          <path d={BORE} fill="#000" />
          <circle cx="744" cy="809" r="36" fill="#000" />
        </mask>
      </defs>
      <g mask="url(#holes)">
        {/* silhouette with its rounded border */}
        <path
          d="M664 450Q676 462 676 480V810A68 68 0 0 0 804 842C835 803 905 722 942 692S1010 648 1070 618S1140 592 1160 581S1225 548 1237 510Q1243 490 1244 468L1247 417V350L900 340L772 400Z"
          fill="#4c4c4a"
          stroke="#0c0c0c"
          strokeWidth="1.6"
        />
        {/* big boss rim */}
        <circle cx="772.5" cy="392.5" r="123" fill="url(#rim)" />
        <path d="M664 450A123 123 0 1 1 880 332" {...line} />
        <circle cx="772.5" cy="392.5" r="110" fill="#5b5b5b" />
        <path d="M689 478Q687 466 679 450A110 110 0 1 1 867 336L880 362" {...line} />
        {/* plate */}
        <path
          d="M689 478V765L744 740L817 802C845 765 880 733 897 718S935 685 964 665S1020 628 1051 613S1130 582 1155 570S1212 540 1221 510Q1229 490 1230 468L1232 417H850"
          fill="#5b5b5b"
          stroke="#0c0c0c"
          strokeWidth="1.3"
        />
        {/* arm */}
        <path d="M879 362Q886 350 882 332L1087 338L1235 343Q1246 344 1247 352V369H866Z" fill="url(#beam)" stroke="#0c0c0c" strokeWidth="1.4" />
        <path d="M866 369H1247V418H866Z" fill="#5b5b5b" stroke="#0c0c0c" strokeWidth="1.4" />
        <path d="M868 374H1240M872 378H1242M872 409H1242M870 413H1247" {...line} strokeWidth={1.6} />
        <path d="M909 377V410M1086.5 338V368M1235 343V369M879 362L935 364L1010 367H1070M1245 377V415M1230 468H1244M1155 570L1158 582" {...line} strokeWidth={1.8} />
        {/* snap-in bore */}
        <circle cx="772.5" cy="392.5" r="97" fill="#6a6a6a" stroke="#0c0c0c" strokeWidth="1.4" />
        <circle cx="772.5" cy="392.5" r="92" fill="url(#bore)" stroke="#0c0c0c" strokeWidth="1.4" />
        <circle cx="772.5" cy="392.5" r="80" fill="#5b5b5b" stroke="#0c0c0c" strokeWidth="1.4" />
        <path d="M799 318L808 309L826 319L819 333ZM705 365L688 354L699 336L715 347ZM841 422L858 432L846 450L832 441ZM746 462L737 478L716 465L723 452Z" fill="#4e4e4e" stroke="#0c0c0c" strokeWidth="1.3" />
        <path d="M820 316L813 329M846 446L834 438M691 350L706 361M733 477L742 460" stroke="#a0a0a0" strokeWidth="2" />
        <path d="M675 392.5H693M852 392.5H869" {...line} />
        <path d={BORE} {...line} strokeWidth={3} />
        {/* small boss */}
        <circle cx="744" cy="804" r="69" fill="#858585" stroke="#0c0c0c" strokeWidth="1.4" />
        <circle cx="744" cy="810" r="67" fill="#4a4a48" stroke="#0c0c0c" strokeWidth="1.4" />
        <path d="M679 800A66 66 0 0 1 809 800" fill="none" stroke="#8e8e8e" strokeWidth="3" />
        <circle cx="744" cy="810" r="62" fill="#5b5b5b" stroke="#0c0c0c" strokeWidth="1.4" />
        <circle cx="744" cy="809" r="43" fill="#4e504c" stroke="#0c0c0c" strokeWidth="1.4" />
        <circle cx="744" cy="809" r="36" {...line} strokeWidth={3} />
        <path d="M805 809H817M677 809H682" {...line} />
      </g>
      <g fill="#5b5b5b" stroke="#0a0a0a" strokeWidth="1.2" fontFamily="Liberation Mono, monospace">
        <text transform="translate(1195 437) rotate(180)" fontSize="25">0114DAW00521N-PIA02</text>
        <text transform="translate(900 524) rotate(180)" fontSize="25">&gt;POM&lt;</text>
        <text transform="translate(780 643) rotate(180)" fontSize="33" fontFamily="Liberation Sans Narrow, Liberation Sans, sans-serif">RH</text>
      </g>
      <g fill="#dcdcdc" stroke="#4a4a4a" strokeWidth="1">
        <text x="577" y="535" fontSize="80" fontFamily="Noto Sans CJK SC, sans-serif" fontWeight="300">莫西网</text>
        <text x="815" y="533" fontSize="67" fontFamily="Liberation Mono, monospace">www.3dmox.com</text>
      </g>
    </svg>
  )
}

function Compass() {
  return (
    <svg viewBox="1640 300 160 160" width="160" height="160" className="absolute top-[119px] right-[63px]" aria-label="Compass" role="img">
      <path d="M1650 398V317H1728Q1745 334 1745 358Q1744 380 1728 398Q1711 415 1689 415Q1667 413 1650 398Z" fill="#1e3f58" stroke="#d8d0f8" strokeWidth="2.5" />
      <path d="M1689 358H1764M1689 358V433" stroke="#d8d0f8" strokeWidth="2.5" />
      <rect x="1682" y="350" width="14" height="14" fill="#d00000" />
      <g fill="#e6e630" fontFamily="Noto Sans, sans-serif" fontSize="20">
        <text x="1702" y="375">z</text>
        <text x="1777" y="377">y</text>
        <text x="1706" y="450">x</text>
      </g>
    </svg>
  )
}

function CornerAxis() {
  return (
    <svg viewBox="1800 865 60 60" width="60" height="60" className="absolute right-[3px] bottom-[3px]" aria-hidden="true">
      <path d="M1845 881H1807V918" fill="none" stroke="#fff" strokeWidth="1.5" />
      <g fill="#fff" fontFamily="Noto Sans, sans-serif" fontSize="18">
        <text x="1844" y="883">y</text>
        <text x="1807" y="919">x</text>
      </g>
    </svg>
  )
}

function SideTools() {
  return (
    <aside className="w-[53px] shrink-0 bg-[linear-gradient(90deg,#ffffff,#ffffff_5px,#cdcde6_12px,#cdcde6_38px,#b0b0c2)] pl-[7px]">
      <div className="mt-[15px] h-1 w-[25px] border-b-2 border-[#a4a4b6] bg-white" />
      <button type="button" aria-label="Sketcher" className="relative mt-[12px] ml-[7px] block h-[38px] w-[39px]">
        <Icon name="sketcher" />
        <Arrow className="absolute right-0 bottom-0" />
      </button>
      <div className="mt-[16px] h-1 w-[25px] border-b-2 border-[#a4a4b6] bg-white" />
      <button type="button" aria-label="Settings" className="mt-[12px] ml-[6px] block"><Icon name="gear" /></button>
    </aside>
  )
}

function Logo() {
  return (
    <svg viewBox="0 0 62 58" width="62" height="58" className="ml-[17px] shrink-0" role="img" aria-label="CATIA">
      <path d="M13 3q13-2 11 3-2 4-8 6 8 1 3 8-2 4-7 5 7-7 4-11l-7-1q11-4 12-8z" fill="#d02c34" />
      <path d="M4 18q13-1 10 8-4 8-16 10l6-13 4 1-3 7q6-2 8-7 1-3-9-4z" fill="#3c3c8c" />
      <path d="M34 13q-11 0-11 5 0 3 4 7 3 4-1 6-3 2-9 2-1 3 4 3 10-1 12-7 1-4-4-8-3-5 5-8z" fill="#f0a028" />
      <text x="9" y="48" fontFamily="Liberation Sans" fontSize="14" fontWeight="700" fontStyle="italic" fill="#3c3478">CATIA</text>
    </svg>
  )
}

function BottomTools() {
  return (
    <div className="flex h-[56px] shrink-0 overflow-hidden border-b-2 border-[#7c7c8a] bg-[linear-gradient(#ffffff,#ffffff_3px,#cdcde6_18px,#cdcde6_38px,#a4a4b4)]">
      <Tools className="ml-[28px]" items="vise" />
      <Tools className="ml-[46px]" items="openPen+ openBox+" />
      <Tools className="ml-[34px]" items="newDoc open save print cut copy paste undo+ redo+ whats" />
      <Tools className="ml-[43px]" items="machine" />
      <Tools className="ml-[38px]" items="camera" />
      <Tools className="ml-[18px]" items="measure caliper weight" />
      <Tools className="ml-[10px]" items="fly fit pan rotate zoomIn zoomOut normalView quad cube+ cylinder+ hide swap" />
      <Tools className="ml-[18px]" items="render stress inspect analysis" />
      <Logo />
    </div>
  )
}

function StatusBar() {
  return (
    <footer className="flex h-[32px] shrink-0 items-stretch bg-[#cdcde6] pt-[5px] text-[17px] text-[#20203a]">
      <p className="flex-1 pl-[4px] leading-[26px]">Select an object or a command</p>
      <input aria-label="Command" className="w-[448px] border-2 border-t-[#707078] border-r-white border-b-white border-l-[#707078] bg-white px-1" />
      {['M2 2h9v9H2zM18 1v17H3M13 14h2', 'M10 3a7 7 0 1 0 1 0M8 10h3v5M20 1v17H6'].map((d, i) => (
        <button key={d} type="button" aria-label={['Dialog', 'Knowledge'][i]} className="ml-1 flex w-[45px] items-center justify-center border-2 border-t-white border-r-[#8a8a98] border-b-transparent border-l-white">
          <svg viewBox="0 0 22 20" width="22" height="20"><path d={d} fill="none" stroke="#8e8e9c" strokeWidth="2" /></svg>
        </button>
      ))}
    </footer>
  )
}

export default function App() {
  return (
    <div className="flex h-screen flex-col overflow-hidden font-['Open_Sans','Noto_Sans',sans-serif]">
      <TitleBar />
      <MenuBar />
      <TopTools />
      <main className="flex min-h-0 flex-1">
        <div className="flex min-w-0 flex-1 bg-[linear-gradient(#333366,#3b3a6b_35%,#464578_67%,#6c6a90_78%,#9290ae_91%,#adacc0)]">
          <Scroller />
          <div className="relative flex min-w-0 flex-1 overflow-hidden">
            <Tree />
            <Crank />
            <Compass />
            <CornerAxis />
          </div>
        </div>
        <SideTools />
      </main>
      <BottomTools />
      <StatusBar />
    </div>
  )
}
